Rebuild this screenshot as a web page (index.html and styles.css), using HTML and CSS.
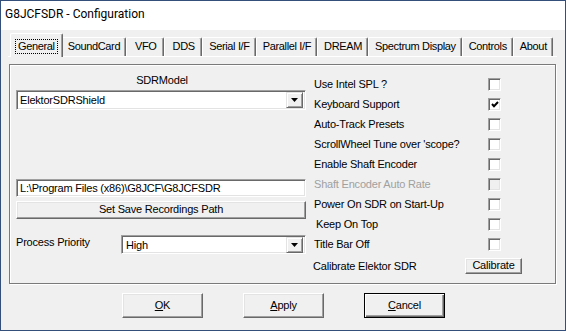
FILE: index.html
```html
<!DOCTYPE html>
<html>
<head>
<meta charset="utf-8">
<title>G8JCFSDR - Configuration</title>
<link rel="stylesheet" href="styles.css">
</head>
<body>
<div class="window">
  <div class="titlebar">G8JCFSDR - Configuration</div>
  <div class="client">
    <div class="tabs">
      <div class="tab active"><span class="focus">General</span></div>
      <div class="tab">SoundCard</div>
      <div class="tab">VFO</div>
      <div class="tab">DDS</div>
      <div class="tab">Serial I/F</div>
      <div class="tab">Parallel I/F</div>
      <div class="tab">DREAM</div>
      <div class="tab">Spectrum Display</div>
      <div class="tab">Controls</div>
      <div class="tab">About</div>
    </div>
    <div class="page">
      <div class="frame">
        <div class="left">
          <div class="caption">SDRModel</div>
          <div class="combo sunken">
            <span class="value">ElektorSDRShield</span>
            <span class="drop"><svg width="7" height="4" viewBox="0 0 7 4"><polygon points="0,0 7,0 3.5,4" fill="#000"/></svg></span>
          </div>
          <div class="edit sunken">L:\Program Files (x86)\G8JCF\G8JCFSDR</div>
          <div class="btn wide">Set Save Recordings Path</div>
          <div class="prio">
            <span class="prio-label">Process Priority</span>
            <div class="combo short sunken">
              <span class="value">High</span>
              <span class="drop"><svg width="7" height="4" viewBox="0 0 7 4"><polygon points="0,0 7,0 3.5,4" fill="#000"/></svg></span>
            </div>
          </div>
        </div>
        <div class="right">
          <div class="opt"><span class="lbl">Use Intel SPL ?</span><span class="check sunken"></span></div>
          <div class="opt"><span class="lbl">Keyboard Support</span><span class="check sunken"><svg width="8" height="7" viewBox="0 0 8 7"><path d="M1 3 L3 5.2 L7 1" fill="none" stroke="#000" stroke-width="2"/></svg></span></div>
          <div class="opt"><span class="lbl">Auto-Track Presets</span><span class="check sunken"></span></div>
          <div class="opt"><span class="lbl">ScrollWheel Tune over 'scope?</span><span class="check sunken"></span></div>
          <div class="opt"><span class="lbl">Enable Shaft Encoder</span><span class="check sunken"></span></div>
          <div class="opt disabled"><span class="lbl">Shaft Encoder Auto Rate</span><span class="check sunken"></span></div>
          <div class="opt"><span class="lbl">Power On SDR on Start-Up</span><span class="check sunken"></span></div>
          <div class="opt"><span class="lbl indent">Keep On Top</span><span class="check sunken"></span></div>
          <div class="opt"><span class="lbl">Title Bar Off</span><span class="check sunken"></span></div>
          <div class="calib">
            <span class="calib-label">Calibrate Elektor SDR</span>
            <div class="btn small">Calibrate</div>
          </div>
        </div>
      </div>
    </div>
    <div class="buttons">
      <div class="btn action"><span class="u">O</span>K</div>
      <div class="btn action"><span class="u">A</span>pply</div>
      <div class="btn action default"><span class="u">C</span>ancel</div>
    </div>
  </div>
</div>
</body>
</html>
```
FILE: styles.css
```css
* { box-sizing: border-box; }
html, body { margin: 0; padding: 0; background: #f0f0f0; }
body {
  font-family: "Liberation Sans", Arial, sans-serif;
  font-size: 11px;
  letter-spacing: -0.2px;
  color: #000;
}
.window {
  width: 566px;
  height: 331px;
  border: 1px solid #34507a;
  background: #f0f0f0;
  display: flex;
  flex-direction: column;
}
.titlebar {
  height: 29px;
  background: #fff;
  padding-left: 4px;
  line-height: 27px;
  font-family: Roboto, "Liberation Sans", sans-serif;
  font-size: 12px;
  letter-spacing: 0;
  color: #000;
}
.client {
  flex: 1;
  padding-top: 3px;
}
.tabs {
  display: flex;
  align-items: flex-end;
  padding-left: 11px;
  height: 23px;
}
.tab {
  height: 19px;
  min-width: 38px;
  padding: 0 5px 0 6px;
  text-align: center;
  line-height: 17px;
  letter-spacing: -0.35px;
  background: #f0f0f0;
  border-top: 1px solid #fff;
  border-left: 1px solid #fff;
  border-right: 1px solid #696969;
  box-shadow: inset -1px 0 0 #a0a0a0;
  border-top-left-radius: 2px;
  border-top-right-radius: 2px;
  white-space: nowrap;
}
.tab.active {
  height: 24px;
  margin: 0 -2px -1px;
  padding: 0 5px 0 5px;
  position: relative;
  z-index: 1;
  line-height: 20px;
  padding-top: 2px;
}
.focus {
  outline: 1px dotted #000;
  padding: 0 2px 1px;
}
.page {
  border-top: 1px solid #fff;
  margin-left: 7px;
  margin-right: 8px;
  padding-top: 7px;
}
.frame {
  margin-left: 1px;
  width: 547px;
  height: 220px;
  border: 1px solid #7a7a7a;
  box-shadow: inset 1px 1px 0 #fff, 1px 1px 0 #fff;
  display: flex;
  padding-left: 6px;
}
.left {
  width: 290px;
  padding-top: 8px;
  display: flex;
  flex-direction: column;
}
.caption {
  text-align: center;
  height: 14px;
  line-height: 14px;
  padding-left: 2px;
}
.sunken {
  background: #fff;
  border: 1px solid;
  border-color: #a0a0a0 #fff #fff #a0a0a0;
  box-shadow: inset 1px 1px 0 #696969, inset -1px -1px 0 #e3e3e3;
}
.combo {
  margin-top: 3px;
  height: 20px;
  display: flex;
  align-items: center;
  justify-content: space-between;
  padding: 2px;
}
.combo .value {
  padding-left: 1px;
  line-height: 16px;
}
.drop {
  width: 17px;
  height: 16px;
  display: flex;
  align-items: center;
  justify-content: center;
  background: #f0f0f0;
  border: 1px solid;
  border-color: #e3e3e3 #696969 #696969 #e3e3e3;
  box-shadow: inset 1px 1px 0 #fff, inset -1px -1px 0 #a0a0a0;
}
.edit {
  margin-top: 69px;
  height: 18px;
  line-height: 16px;
  padding-left: 3px;
}
.btn {
  background: #f0f0f0;
  border: 1px solid;
  border-color: #fff #696969 #696969 #fff;
  box-shadow: inset -1px -1px 0 #a0a0a0, inset 1px 1px 0 #e3e3e3;
  text-align: center;
  white-space: nowrap;
}
.btn.wide {
  margin-top: 4px;
  height: 18px;
  line-height: 15px;
}
.prio {
  margin-top: 16px;
  display: flex;
  align-items: flex-start;
}
.prio-label {
  width: 105px;
  padding-top: 1px;
  line-height: 12px;
}
.combo.short {
  margin-top: 0;
  width: 185px;
  height: 19px;
  padding: 1px 2px;
}
.combo.short .value { padding-left: 2px; }
.right {
  padding-top: 9px;
  margin-left: 8px;
  display: flex;
  flex-direction: column;
}
.opt {
  display: flex;
  align-items: center;
  height: 20px;
}
.lbl {
  width: 174px;
}
.lbl.indent { padding-left: 2px; }
.check {
  width: 13px;
  height: 13px;
  display: flex;
  align-items: center;
  justify-content: center;
}
.opt.disabled .lbl { color: #a0a0a0; }
.opt.disabled .check { background: #f0f0f0; }
.calib {
  display: flex;
  align-items: center;
  margin-top: 4px;
  height: 16px;
}
.calib-label {
  width: 152px;
  margin-left: -1px;
}
.btn.small {
  width: 57px;
  height: 16px;
  line-height: 13px;
}
.buttons {
  display: flex;
  justify-content: center;
  gap: 40px;
  padding-top: 9px;
  padding-left: 1px;
}
.btn.action {
  width: 81px;
  height: 25px;
  line-height: 22px;
}
.btn.default {
  border: 1px solid #000;
  box-shadow: inset 1px 1px 0 #fff, inset -1px -1px 0 #696969, inset -2px -2px 0 #a0a0a0;
}
.u { text-decoration: underline; }
```
